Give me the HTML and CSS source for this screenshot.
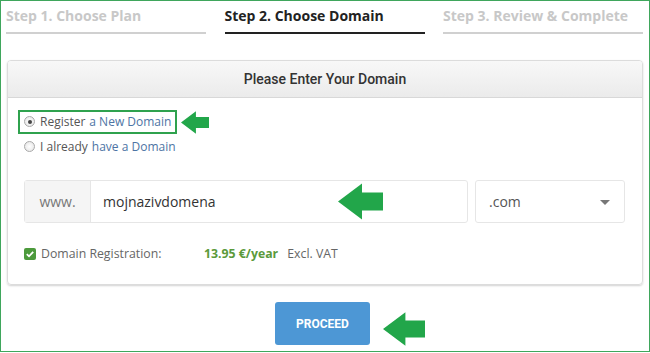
FILE: index.html
```html
<!DOCTYPE html>
<html>
<head>
  <meta charset="utf-8">
  <title>Choose Domain</title>
  <link rel="stylesheet" href="styles.css">
</head>
<body>
  <div class="frame">
    <div class="steps">
      <div class="step">Step 1. Choose Plan</div>
      <div class="step current">Step 2. Choose Domain</div>
      <div class="step">Step 3. Review &amp; Complete</div>
    </div>

    <div class="panel">
      <div class="panel-head">Please Enter Your Domain</div>
      <div class="panel-body">
        <div class="choice-row">
          <label class="choice marked"><span class="radio checked"></span>Register <a href="#">a New Domain</a></label>
          <svg class="arrow small" viewBox="0 0 45 36"><polygon points="0,18 24,0 24,9 45,9 45,27 24,27 24,36"/></svg>
        </div>
        <label class="choice"><span class="radio"></span>I already <a href="#">have a Domain</a></label>

        <div class="domain">
          <div class="input-group">
            <span class="addon">www.</span>
            <span class="field">mojnazivdomena</span>
            <svg class="arrow mid" viewBox="0 0 45 36"><polygon points="0,18 24,0 24,9 45,9 45,27 24,27 24,36"/></svg>
          </div>
          <div class="select">.com<span class="caret"></span></div>
        </div>

        <div class="reg">
          <span class="check"><svg viewBox="0 0 12 12"><path d="M2.8 6.2 L5 8.3 L9.2 3.8" /></svg></span>
          <span class="reg-label">Domain Registration:</span>
          <span class="price">13.95 €/year</span>
          <span class="vat">Excl. VAT</span>
        </div>
      </div>
    </div>

    <div class="actions">
      <button class="btn">PROCEED</button>
      <svg class="arrow big" viewBox="0 0 45 36"><polygon points="0,18 24,0 24,9 45,9 45,27 24,27 24,36"/></svg>
    </div>
  </div>
</body>
</html>
```

FILE: styles.css
```css
body {
  margin: 0;
  background: #fff;
  font-family: "Open Sans", "DejaVu Sans", sans-serif;
}

.frame {
  box-sizing: border-box;
  width: 650px;
  height: 352px;
  border: 1px solid #3fa65c;
  padding-top: 5px;
}

/* steps */
.steps {
  display: grid;
  grid-template-columns: 200px 200px 200px;
  column-gap: 18.5px;
  margin-left: 5px;
}
.step {
  font-size: 14px;
  font-weight: 700;
  line-height: 20px;
  color: #c8c8c8;
  padding-bottom: 6px;
  border-bottom: 2px solid #d0d0d0;
}
.step.current {
  color: #222;
  border-bottom-color: #222;
}

/* panel */
.panel {
  margin: 26px 6px 0;
  border: 1px solid #dcdcdc;
  border-radius: 4px;
  box-shadow: 0 1px 2px rgba(0,0,0,.18);
  overflow: hidden;
}
.panel-head {
  height: 36px;
  line-height: 36px;
  text-align: center;
  font-family: Roboto, "Liberation Sans", sans-serif;
  font-weight: 500;
  font-size: 14px;
  color: #333;
  background: linear-gradient(#f8f8f8, #ebebeb);
  border-bottom: 1px solid #d8d8d8;
}
.panel-body {
  padding: 10px 17px 22px 16px;
}

.choice-row {
  display: flex;
  align-items: center;
  gap: 4px;
}
.choice {
  display: inline-flex;
  align-items: center;
  font-size: 12px;
  line-height: 16px;
  color: #555;
  margin-top: 3px;
}
.choice a {
  color: #4d74a4;
  text-decoration: none;
  margin-left: 4px;
}
.choice.marked {
  margin: 0 0 0 -6px;
  padding: 2px 4px;
  border: 2px solid #2fa24e;
}
.radio {
  box-sizing: border-box;
  width: 11px;
  height: 11px;
  border-radius: 50%;
  border: 1px solid #a9a9a9;
  background: radial-gradient(#fff, #e2e2e2);
  margin-right: 5px;
  position: relative;
}
.radio.checked::after {
  content: "";
  position: absolute;
  left: 2.5px;
  top: 2.5px;
  width: 4px;
  height: 4px;
  border-radius: 50%;
  background: #444;
}

.arrow {
  fill: #22a64a;
  display: block;
}
.arrow.small { width: 28px; height: 25px; margin-top: 2px; }
.arrow.mid {
  position: absolute;
  left: 313px;
  top: 2px;
  width: 45px;
  height: 37px;
}
.arrow.big { width: 42px; height: 38px; margin-top: 8px; }

/* domain input */
.domain {
  display: flex;
  gap: 7px;
  margin-top: 23px;
  height: 43px;
}
.input-group {
  flex: 1;
  display: flex;
  position: relative;
  border: 1px solid #e6e6e6;
  border-radius: 3px;
}
.addon {
  width: 65px;
  background: #f5f5f5;
  border-right: 1px solid #e6e6e6;
  color: #777;
  font-size: 14px;
  line-height: 41px;
  text-align: center;
}
.field {
  padding-left: 12px;
  font-size: 14px;
  line-height: 41px;
  color: #333;
}
.select {
  width: 150px;
  box-sizing: border-box;
  border: 1px solid #e6e6e6;
  border-radius: 3px;
  padding-left: 13px;
  font-size: 14px;
  line-height: 41px;
  color: #555;
  position: relative;
}
.caret {
  position: absolute;
  right: 14px;
  top: 19px;
  border-left: 5px solid transparent;
  border-right: 5px solid transparent;
  border-top: 5px solid #777;
}

/* registration line */
.reg {
  display: flex;
  align-items: center;
  margin-top: 23px;
  font-size: 12.3px;
  line-height: 16px;
  color: #666;
}
.check {
  width: 12px;
  height: 12px;
  border-radius: 2px;
  background: #4c9a3c;
  margin-right: 5px;
}
.check svg {
  display: block;
  width: 12px;
  height: 12px;
  fill: none;
  stroke: #fff;
  stroke-width: 1.8;
}
.reg-label { width: 163px; }
.price {
  color: #5b9a3b;
  font-weight: 700;
  margin-right: 9px;
}

/* button */
.actions {
  display: flex;
  justify-content: center;
  gap: 13px;
  margin-top: 17px;
  padding-left: 50px;
}
.btn {
  width: 95px;
  height: 43px;
  border: 0;
  border-radius: 3px;
  background: #4d97d5;
  color: #fff;
  font-family: Roboto, "Liberation Sans", sans-serif;
  font-weight: 700;
  font-size: 12px;
}
```
